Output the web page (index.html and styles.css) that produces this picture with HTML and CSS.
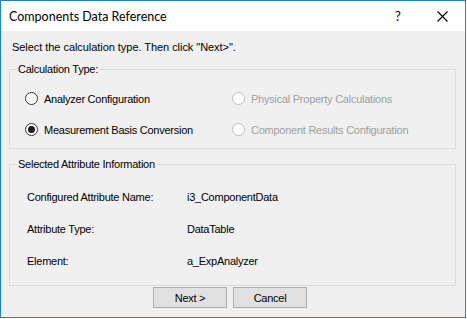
FILE: index.html
```html
<!DOCTYPE html>
<html>
<head>
<meta charset="utf-8">
<link rel="stylesheet" href="styles.css">
</head>
<body>
<div class="window">
  <div class="titlebar">
    <div class="title">Components Data Reference</div>
    <div class="tb-btn help">?</div>
    <div class="tb-btn close">
      <svg width="11" height="11" viewBox="0 0 11 11"><path d="M0.5 0.5 L10.5 10.5 M10.5 0.5 L0.5 10.5" stroke="#000" stroke-width="1.1" fill="none"/></svg>
    </div>
  </div>
  <div class="client">
    <div class="prompt">Select the calculation type. Then click "Next&gt;".</div>
    <div class="group group-calc">
      <div class="group-title">Calculation Type:</div>
      <div class="radio-grid">
        <div class="radio"><span class="circle"></span><span>Analyzer Configuration</span></div>
        <div class="radio disabled"><span class="circle"></span><span>Physical Property Calculations</span></div>
        <div class="radio"><span class="circle checked"></span><span>Measurement Basis Conversion</span></div>
        <div class="radio disabled"><span class="circle"></span><span>Component Results Configuration</span></div>
      </div>
    </div>
    <div class="group group-attr">
      <div class="group-title">Selected Attribute Information</div>
      <div class="attr-grid">
        <div>Configured Attribute Name:</div><div>i3_ComponentData</div>
        <div>Attribute Type:</div><div>DataTable</div>
        <div>Element:</div><div>a_ExpAnalyzer</div>
      </div>
    </div>
    <div class="buttons">
      <button class="btn">Next &gt;</button>
      <button class="btn">Cancel</button>
    </div>
  </div>
</div>
</body>
</html>
```
FILE: styles.css
```css
html, body {
  margin: 0;
  padding: 0;
  background: #ffffff;
}
.window {
  width: 466px;
  height: 318px;
  box-sizing: border-box;
  border: 1px solid #1883d7;
  display: flex;
  flex-direction: column;
  font-family: "Liberation Sans", Arial, sans-serif;
  font-size: 11px;
  color: #000;
}
.titlebar {
  height: 30px;
  background: #fff;
  display: flex;
  align-items: center;
  flex: none;
}
.title {
  flex: 1;
  padding-left: 8px;
  font-family: Lato, "Liberation Sans", sans-serif;
  font-size: 12.5px;
  color: #000;
}
.tb-btn {
  width: 46px;
  height: 30px;
  display: flex;
  align-items: center;
  justify-content: center;
}
.help {
  font-family: Lato, "Liberation Sans", sans-serif;
  font-size: 13px;
  padding-left: 4px;
  box-sizing: border-box;
}
.client {
  flex: 1;
  background: #f0f0f0;
  padding: 0 9px 0 8px;
  display: flex;
  flex-direction: column;
}
.prompt {
  margin-top: 10px;
  padding-left: 3px;
  line-height: 13px;
  height: 13px;
  letter-spacing: -0.05px;
}
.group {
  position: relative;
  border: 1px solid #dcdcdc;
  box-sizing: border-box;
  letter-spacing: -0.25px;
}
.group-title {
  position: absolute;
  top: -7px;
  left: 6px;
  padding: 0 2px;
  background: #f0f0f0;
  line-height: 13px;
}
.group-calc {
  margin-top: 15px;
  height: 80px;
  padding: 13px 0 0 15px;
}
.radio-grid {
  display: grid;
  grid-template-columns: 207px 1fr;
  grid-auto-rows: 31px;
}
.radio {
  display: flex;
  align-items: center;
  gap: 6px;
}
.circle {
  width: 13px;
  height: 13px;
  box-sizing: border-box;
  border: 1px solid #333;
  border-radius: 50%;
  background: #fff;
  display: flex;
  align-items: center;
  justify-content: center;
}
.circle.checked::after {
  content: "";
  width: 7px;
  height: 7px;
  border-radius: 50%;
  background: #1a1a1a;
}
.radio.disabled {
  color: #a0a0a0;
}
.radio.disabled .circle {
  border-color: #bcbcbc;
  background: #fff;
}
.group-attr {
  margin-top: 15px;
  height: 122px;
  padding: 16px 0 0 17px;
}
.attr-grid {
  display: grid;
  grid-template-columns: 160px 1fr;
  grid-auto-rows: 32px;
  align-items: center;
}
.buttons {
  margin-top: 1px;
  padding-left: 144px;
  display: flex;
  gap: 6px;
}
.btn {
  width: 74px;
  height: 21px;
  box-sizing: border-box;
  border: 1px solid #adadad;
  background: #e1e1e1;
  font-family: "Liberation Sans", Arial, sans-serif;
  font-size: 11px;
  letter-spacing: -0.25px;
  color: #000;
  padding: 0;
  margin: 0;
}
```
